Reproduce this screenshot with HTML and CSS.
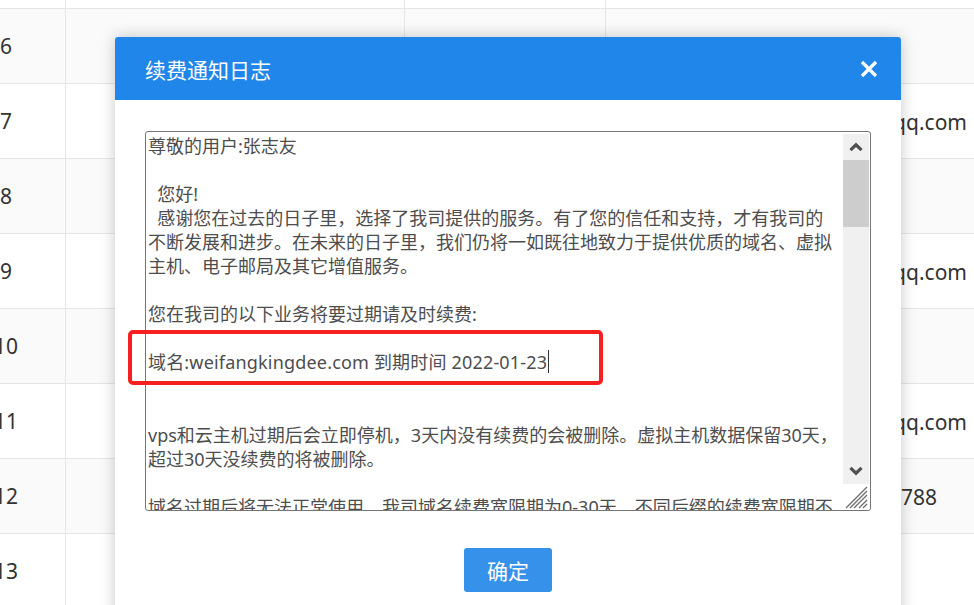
FILE: index.html
```html
<!DOCTYPE html>
<html lang="zh-CN">
<head>
<meta charset="utf-8">
<title>续费通知日志</title>
<link rel="stylesheet" href="styles.css">
</head>
<body>
<div class="grid">
  <div class="row"><div class="cell num">5</div><div class="cell"></div><div class="cell"></div><div class="cell contact"></div></div>
  <div class="row alt"><div class="cell num">6</div><div class="cell"></div><div class="cell"></div><div class="cell contact"></div></div>
  <div class="row"><div class="cell num">7</div><div class="cell"></div><div class="cell"></div><div class="cell contact">2684930751@qq.com</div></div>
  <div class="row alt"><div class="cell num">8</div><div class="cell"></div><div class="cell"></div><div class="cell contact"></div></div>
  <div class="row"><div class="cell num">9</div><div class="cell"></div><div class="cell"></div><div class="cell contact">1538806742@qq.com</div></div>
  <div class="row alt"><div class="cell num">10</div><div class="cell"></div><div class="cell"></div><div class="cell contact"></div></div>
  <div class="row"><div class="cell num">11</div><div class="cell"></div><div class="cell"></div><div class="cell contact">3097512864@qq.com</div></div>
  <div class="row alt"><div class="cell num">12</div><div class="cell"></div><div class="cell"></div><div class="cell contact phone">13805361788</div></div>
  <div class="row"><div class="cell num">13</div><div class="cell"></div><div class="cell"></div><div class="cell contact"></div></div>
</div>

<div class="dialog">
  <div class="dialog-head">
    <span class="dialog-title">续费通知日志</span>
    <span class="close">
      <svg width="18" height="18" viewBox="0 0 18 18"><path d="M2 2 L16 16 M16 2 L2 16" stroke="#fff" stroke-width="3.2" fill="none"/></svg>
    </span>
  </div>
  <div class="dialog-body">
    <div class="textarea">
      <div class="ta-text">尊敬的用户:张志友

  您好!
  感谢您在过去的日子里，选择了我司提供的服务。有了您的信任和支持，才有我司的
不断发展和进步。在未来的日子里，我们仍将一如既往地致力于提供优质的域名、虚拟
主机、电子邮局及其它增值服务。

您在我司的以下业务将要过期请及时续费:

<span class="domain">域名:weifangkingdee.com 到期时间 2022-01-23</span><span class="caret"></span>


vps和云主机过期后会立即停机，3天内没有续费的会被删除。虚拟主机数据保留30天，
超过30天没续费的将被删除。

域名过期后将无法正常使用，我司域名续费宽限期为0-30天，不同后缀的续费宽限期不</div>
      <div class="ta-scroll">
        <div class="sb-btn"><svg width="14" height="10" viewBox="0 0 14 10"><polyline points="1.5,8.2 7,2.8 12.5,8.2" fill="none" stroke="#505050" stroke-width="3.2"/></svg></div>
        <div class="sb-track"><div class="sb-thumb"></div></div>
        <div class="sb-btn"><svg width="14" height="10" viewBox="0 0 14 10"><polyline points="1.5,1.8 7,7.2 12.5,1.8" fill="none" stroke="#505050" stroke-width="3.2"/></svg></div>
        <div class="sb-corner"><svg width="26" height="26" viewBox="0 0 26 26"><path d="M3 24 L24 3 M7 24 L24 7 M11 24 L24 11 M16 24 L24 16 M20 24 L24 20" stroke="#6e6e6e" stroke-width="1.3" fill="none"/></svg></div>
      </div>
    </div>
    <button class="ok">确定</button>
  </div>
</div>

<div class="annot"></div>
</body>
</html>
```
FILE: styles.css
```css
* { box-sizing: border-box; }
html, body { margin: 0; padding: 0; }
body {
  width: 974px;
  height: 605px;
  overflow: hidden;
  position: relative;
  background: #fff;
  font-family: "Noto Sans", "Noto Sans CJK SC", sans-serif;
  color: #333;
}

.grid {
  margin-top: -66px;
  margin-left: -53px;
  width: 1027px;
}
.row {
  display: grid;
  grid-template-columns: 119px 339px 201px 1fr;
  height: 75px;
  border-bottom: 1px solid #e6e6e6;
}
.row.alt { background: #fafafa; }
.cell {
  border-right: 1px solid #e6e6e6;
  display: flex;
  align-items: center;
  font-size: 21px;
  white-space: nowrap;
  overflow: hidden;
}
.cell.num { justify-content: center; }
.cell.contact {
  border-right: none;
  justify-content: flex-end;
  padding-right: 7px;
  padding-top: 2px;
}
.cell.contact.phone { padding-right: 37px; }

.dialog {
  position: absolute;
  left: 115px;
  top: 37px;
  width: 786px;
  height: 600px;
  background: #fff;
  border-radius: 3px 3px 0 0;
  box-shadow: 0 0 16px rgba(0, 0, 0, 0.22);
}
.dialog-head {
  height: 63px;
  background: #2186ea;
  border-radius: 3px 3px 0 0;
  display: flex;
  align-items: center;
  justify-content: space-between;
  padding: 0 23px 0 30px;
}
.dialog-title {
  font-family: "Noto Sans CJK SC", sans-serif;
  font-size: 21px;
  color: #fff;
}
.close { display: flex; }

.dialog-body {
  padding: 31px 30px 0 30px;
  display: flex;
  flex-direction: column;
  align-items: center;
}
.textarea {
  width: 726px;
  height: 380px;
  border: 1px solid #767676;
  border-radius: 3px;
  display: flex;
  background: #fff;
}
.ta-text {
  flex: 1;
  padding: 1.5px 0 0 2px;
  overflow: hidden;
  white-space: pre;
  font-size: 18px;
  line-height: 24.1px;
  color: #4d4d4d;
}
.domain { letter-spacing: 0.18px; }
.caret {
  display: inline-block;
  width: 1px;
  height: 23px;
  margin-left: 1px;
  background: #333;
  vertical-align: top;
}
.ta-scroll {
  width: 26px;
  margin-right: 1px;
  padding-top: 2px;
  display: flex;
  flex-direction: column;
}
.sb-btn {
  height: 26px;
  background: #f0f0f0;
  display: flex;
  align-items: center;
  justify-content: center;
}
.sb-track {
  flex: 1;
  background: #f0f0f0;
}
.sb-thumb {
  height: 67px;
  background: #cdcdcd;
}
.sb-corner {
  height: 26px;
  background: #fff;
  display: flex;
}

.ok {
  margin-top: 37px;
  width: 88px;
  height: 44px;
  border: none;
  border-radius: 3px;
  background: #3591ea;
  color: #fff;
  font-family: "Noto Sans CJK SC", sans-serif;
  font-size: 21px;
  padding: 0;
}

.annot {
  position: absolute;
  left: 128px;
  top: 330px;
  width: 475px;
  height: 55px;
  border: 4px solid #f81f1f;
  border-radius: 5px;
}
```
